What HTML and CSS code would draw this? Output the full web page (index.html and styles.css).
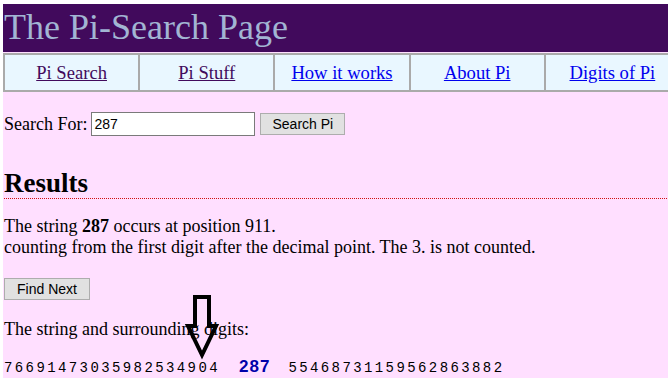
FILE: index.html
```html
<html>
<head>
    <title>The Pi-Search Page</title>
    <link rel="stylesheet" href="styles.css">
</head>
<body>
<div class="page">
    <div class="header">
        <h1>The Pi-Search Page</h1>
    </div>
    <div class="menu">
        <div class="menu-cell"><a class="visited" href="#">Pi Search</a></div>
        <div class="menu-cell"><a class="visited" href="#">Pi Stuff</a></div>
        <div class="menu-cell"><a href="#">How it works</a></div>
        <div class="menu-cell"><a href="#">About Pi</a></div>
        <div class="menu-cell"><a href="#">Digits of Pi</a></div>
    </div>

    <form class="search">
        <label>Search For:</label>
        <input type="text" name="q" value="287" />
        <button type="button">Search Pi</button>
    </form>

    <h2 class="results">Results</h2>
    <p class="found">The string <b>287</b> occurs at position 911.<br />
        counting from the first digit after the decimal point. The 3. is not counted.</p>

    <button class="next" type="button">Find Next</button>

    <p class="around">The string and surrounding digits:</p>
    <div class="digits">
        <span>76691473035982534904</span><b>287</b><span>55468731159562863882</span>
    </div>

    <svg class="arrow" width="36" height="70" viewBox="0 0 36 70">
        <path d="M11 7 H25 V36 H32 L18 65 L4 36 H11 Z" fill="none" stroke="#000" stroke-width="4" />
    </svg>
</div>
</body>
</html>
```

FILE: styles.css
```css
html {
    overflow: hidden;
}

html, body {
    background-color: #FFFFFF;
}

body {
    margin: 4px 0 0 3px;
    font-family: "Liberation Serif", "Times New Roman", serif;
    font-size: 18px;
    color: #000000;
}

.page {
    position: relative;
    width: 678px;
    height: 400px;
    background-color: #FFDFFF;
}

.header {
    background-color: #410A5C;
    height: 48px;
}

.header h1 {
    margin: 0;
    padding: 3px 0 0 1px;
    font-weight: normal;
    font-size: 36px;
    line-height: 40px;
    color: #A2B5D3;
}

.menu {
    display: grid;
    grid-template-columns: repeat(5, 1fr);
    margin-top: 1px;
    background-color: #E9F7FF;
    border: 2px solid #AAAAAA;
    border-right: none;
}

.menu-cell {
    text-align: center;
    font-size: 18.6px;
    line-height: 35px;
    border-right: 2px solid #AAAAAA;
}

.menu-cell a {
    color: #0000EE;
}

.menu-cell a.visited {
    color: #410A5C;
}

.search {
    display: flex;
    align-items: center;
    margin: 20px 0 0 1px;
    height: 24px;
}

.search label {
    margin-right: 4px;
}

.search input {
    width: 164px;
    height: 24px;
    border: 1px solid #7A7A7A;
    padding: 0 2px;
    font-family: "Liberation Sans", Arial, sans-serif;
    font-size: 14px;
    margin-right: 5px;
}

button {
    border: 1px solid #ADADAD;
    background-color: #E1E1E1;
    font-family: "Liberation Sans", Arial, sans-serif;
    font-size: 14px;
    height: 22px;
    padding: 0 11px;
}

.results {
    margin: 32px 0 0 1px;
    font-size: 27px;
    line-height: 30px;
    padding-bottom: 0;
    border-bottom: 1px dotted #D01010;
}

.found {
    margin: 17px 0 0 1px;
    line-height: 21px;
}

.next {
    margin: 20px 0 0 1px;
    width: 86px;
    padding: 0;
}

.around {
    margin: 19px 0 0 1px;
}

.digits {
    display: flex;
    align-items: baseline;
    margin: 17px 0 0 1px;
    font-family: "Liberation Mono", "Courier New", monospace;
    font-size: 14px;
    letter-spacing: 2.4px;
}

.digits b {
    margin: 0 18px 0 19px;
    color: #0000AA;
    font-family: "Liberation Sans", Arial, sans-serif;
    font-size: 17px;
    letter-spacing: 1px;
}

.arrow {
    position: absolute;
    left: 181px;
    top: 286px;
}
```
